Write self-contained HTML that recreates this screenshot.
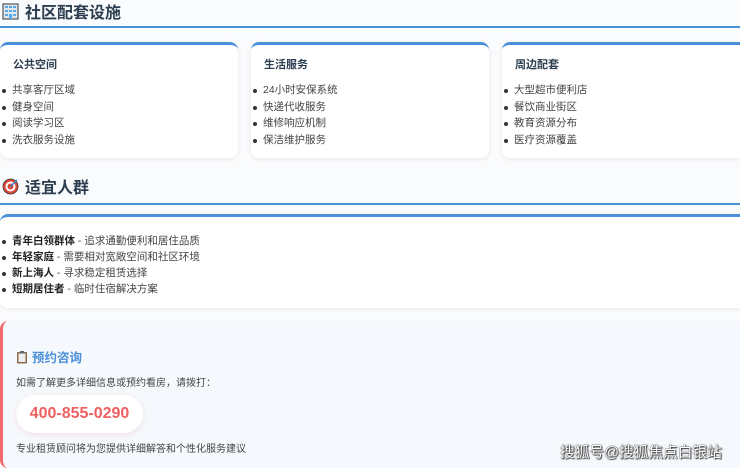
<!DOCTYPE html>
<html style="width:740px;height:468px;overflow:hidden"><head><meta charset="utf-8"><style>
*{margin:0;padding:0;box-sizing:border-box}
body{width:740px;height:468px;overflow:hidden;background:#fafbfc;font-family:"Liberation Sans","Noto Sans CJK SC",sans-serif;color:#333;position:relative}
h2{position:absolute;left:2px;font-size:16px;font-weight:bold;color:#2c3e50;display:flex;align-items:center;gap:6px}
.line{position:absolute;left:0;width:740px;height:2px;background:#4a90d9}
.card{position:absolute;background:#fff;border-top:3px solid #4a90d9;border-radius:8px;box-shadow:0 1px 5px rgba(0,0,0,.08);overflow:hidden}
.card h3{font-size:11px;font-weight:bold;color:#2c3e50;position:absolute;left:13px;top:11px}
ul{list-style:none;position:absolute;left:0}
li{font-size:10.5px;line-height:16.5px;color:#444;padding-left:12px;position:relative}
li:before{content:"";position:absolute;left:2px;top:7px;width:4px;height:4px;border-radius:50%;background:#333}
li b{color:#222}
.consult{position:absolute;left:0;top:321px;width:750px;height:147px;background:#f5f8fc;border-left:3px solid #f06a6a;border-radius:8px 0 0 8px}
</style></head><body>
<h2 style="top:-1px"><svg width="17" height="17" viewBox="0 0 17 17"><rect x="1" y="1" width="15" height="15" fill="#dfe8ef" stroke="#555" stroke-width="1.2"/><g fill="#5aa9e6"><rect x="3" y="3" width="3" height="2"/><rect x="7" y="3" width="3" height="2"/><rect x="11" y="3" width="3" height="2"/><rect x="3" y="7" width="3" height="2"/><rect x="7" y="7" width="3" height="2"/><rect x="11" y="7" width="3" height="2"/><rect x="3" y="11" width="3" height="2"/><rect x="11" y="11" width="3" height="2"/><rect x="7" y="11" width="3" height="5"/></g></svg>社区配套设施</h2>
<div class="line" style="top:26px"></div>

<div class="card" style="left:0;top:42px;width:238px;height:116px"><h3>公共空间</h3><ul style="top:37px"><li>共享客厅区域</li><li>健身空间</li><li>阅读学习区</li><li>洗衣服务设施</li></ul></div>
<div class="card" style="left:251px;top:42px;width:238px;height:116px"><h3>生活服务</h3><ul style="top:37px"><li>24小时安保系统</li><li>快递代收服务</li><li>维修响应机制</li><li>保洁维护服务</li></ul></div>
<div class="card" style="left:502px;top:42px;width:250px;height:116px"><h3>周边配套</h3><ul style="top:37px"><li>大型超市便利店</li><li>餐饮商业街区</li><li>教育资源分布</li><li>医疗资源覆盖</li></ul></div>

<h2 style="top:174px"><svg width="17" height="17" viewBox="0 0 17 17"><circle cx="8.5" cy="8.5" r="7.5" fill="#e04a3a" stroke="#333" stroke-width=".8"/><circle cx="8.5" cy="8.5" r="5" fill="#fff"/><circle cx="8.5" cy="8.5" r="3" fill="#e04a3a"/><path d="M8.5 8.5L15 2" stroke="#3a7fd0" stroke-width="1.5"/></svg>适宜人群</h2>
<div class="line" style="top:203px"></div>
<div class="card" style="left:0;top:214px;width:750px;height:94px"><ul style="top:16px"><li style="line-height:16px">.</li></ul><ul style="top:16px;background:#fff;width:400px"><li style="line-height:16px"><b>青年白领群体</b> - 追求通勤便利和居住品质</li><li style="line-height:16px"><b>年轻家庭</b> - 需要相对宽敞空间和社区环境</li><li style="line-height:16px"><b>新上海人</b> - 寻求稳定租赁选择</li><li style="line-height:16px"><b>短期居住者</b> - 临时住宿解决方案</li></ul></div>

<div class="consult">
<div style="position:absolute;left:13px;top:26px;font-size:12.5px;font-weight:bold;color:#4a90d9;display:flex;align-items:center;gap:4px"><svg width="12" height="14" viewBox="0 0 12 14"><rect x="1" y="2" width="10" height="11.5" rx="1" fill="#8a6a4a"/><rect x="2.5" y="3.5" width="7" height="8.5" fill="#eee"/><rect x="4" y="1" width="4" height="2.5" fill="#666"/></svg>预约咨询</div>
<div style="position:absolute;left:13px;top:53px;font-size:10px;color:#444">如需了解更多详细信息或预约看房，请拨打：</div>
<div style="position:absolute;left:13px;top:74px;width:127px;height:38px;background:#fff;border-radius:19px;box-shadow:0 2px 6px rgba(240,100,100,.15);font-size:16px;font-weight:bold;color:#f06060;text-align:center;line-height:38px">400-855-0290</div>
<div style="position:absolute;left:13px;top:119px;font-size:10px;color:#444">专业租赁顾问将为您提供详细解答和个性化服务建议</div>
</div>
<div style="position:absolute;left:560px;top:441px;font-size:14.7px;color:#fff;text-shadow:0 0 1px #333,0 0 1px #333,1px 1px 1px #333">搜狐号@搜狐焦点白银站</div>
</body></html>
